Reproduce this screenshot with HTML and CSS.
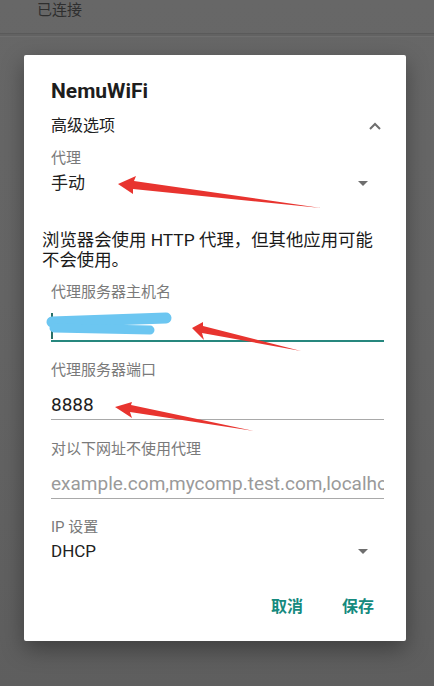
FILE: index.html
```html
<!DOCTYPE html>
<html lang="zh">
<head>
<meta charset="utf-8">
<link rel="stylesheet" href="styles.css">
</head>
<body>
<div class="screen">
  <div class="status">已连接</div>
  <div class="divider"></div>
  <div class="dialog">
    <div class="title">NemuWiFi</div>
    <div class="adv-row">
      <span>高级选项</span>
      <svg class="chev" width="14" height="10" viewBox="0 0 14 10"><path d="M2 8 L7 3 L12 8" fill="none" stroke="#6e6e6e" stroke-width="2"/></svg>
    </div>
    <div class="label l-proxy">代理</div>
    <div class="spinner"><span>手动</span><span class="tri"></span></div>
    <div class="desc">浏览器会使用 HTTP 代理，但其他应用可能不会使用。</div>
    <div class="label l-host">代理服务器主机名</div>
    <div class="field focused"><span class="cursor"></span></div>
    <div class="label l-port">代理服务器端口</div>
    <div class="field">8888</div>
    <div class="label l-bypass">对以下网址不使用代理</div>
    <div class="field hint">example.com,mycomp.test.com,localhost</div>
    <div class="label l-ip">IP 设置</div>
    <div class="spinner ip"><span>DHCP</span><span class="tri"></span></div>
    <div class="actions">
      <span class="btn">取消</span>
      <span class="btn">保存</span>
    </div>
  </div>
  <svg class="annot" width="434" height="686" viewBox="0 0 434 686">
    <g fill="#e8342f">
      <polygon points="118,184 136,176 134,181 321,208 133,189 133,194"/>
      <polygon points="192,328 203,322 203,326 301,351 202,333 204,340"/>
      <polygon points="115,407 132,402 131,405 254,431 130,412 132,418"/>
    </g>
    <g stroke="#6cc6f1" stroke-linecap="round" fill="none">
      <path d="M52 322 L166 318" stroke-width="11"/>
      <path d="M54 328 L150 330" stroke-width="9"/>
    </g>
  </svg>
</div>
</body>
</html>
```
FILE: styles.css
```css
* { box-sizing: border-box; }
html, body { margin: 0; padding: 0; }
body {
  width: 434px;
  height: 686px;
  overflow: hidden;
  font-family: Roboto, "Noto Sans CJK SC", sans-serif;
}
.screen {
  position: relative;
  width: 434px;
  height: 686px;
  background: linear-gradient(#676767 0, #656565 300px, #5e5e5e 686px);
  display: flex;
  flex-direction: column;
}
.status {
  height: 20px;
  line-height: 20px;
  padding-left: 37px;
  font-size: 15px;
  color: #2e2e2e;
}
.divider {
  margin-top: 13px;
  height: 4px;
  border-top: 1px solid #5a5a5a;
  border-bottom: 1px solid #6e6e6e;
  background: #626262;
}
.dialog {
  margin: 18px 28px 0 24px;
  background: #fff;
  border-radius: 2px;
  box-shadow: 0 8px 22px rgba(0,0,0,0.35);
  padding: 24px 22px 22px 27px;
  display: flex;
  flex-direction: column;
  color: #212121;
}
.title {
  font-size: 21px;
  font-weight: 700;
  line-height: 24px;
  color: #1d1d1d;
}
.adv-row {
  margin-top: 11px;
  height: 24px;
  line-height: 24px;
  font-size: 16px;
  display: flex;
  align-items: center;
  justify-content: space-between;
}
.chev { margin-right: 2px; }
.label {
  font-size: 15px;
  line-height: 20px;
  color: #7a7a7a;
}
.l-proxy { margin-top: 10px; }
.spinner {
  margin-top: 3px;
  height: 24px;
  line-height: 24px;
  font-size: 17px;
  display: flex;
  align-items: center;
  justify-content: space-between;
  padding-right: 16px;
}
.tri {
  width: 0;
  height: 0;
  border-left: 5px solid transparent;
  border-right: 5px solid transparent;
  border-top: 5px solid #6e6e6e;
}
.desc {
  margin: 35px 0 0 -9px;
  padding-right: 8px;
  font-size: 17.4px;
  line-height: 20px;
  color: #1a1a1a;
}
.l-host { margin-top: 12px; }
.field {
  padding-top: 13px;
  padding-bottom: 2px;
  height: 40px;
  line-height: 24px;
  font-size: 19px;
  border-bottom: 1px solid #a9a9a9;
  white-space: nowrap;
  overflow: hidden;
  color: #1e1e1e;
}
.field.focused {
  padding-top: 9px;
  padding-bottom: 5px;
  border-bottom: 2px solid #26877e;
  position: relative;
}
.cursor {
  display: block;
  width: 2px;
  height: 26px;
  margin-top: 2px;
  background: #2a7068;
}
.l-port { margin-top: 18px; }
.l-bypass { margin-top: 19px; }
.hint { color: #9a9a9a; }
.l-ip { margin-top: 18px; }
.spinner.ip { margin-top: 2px; }
.actions {
  margin-top: 32px;
  height: 24px;
  display: flex;
  justify-content: flex-end;
  gap: 39px;
  padding-right: 10px;
}
.btn {
  font-size: 16px;
  font-weight: 700;
  line-height: 24px;
  color: #158a7e;
}
.annot {
  position: absolute;
  left: 0;
  top: 0;
  pointer-events: none;
}
```
